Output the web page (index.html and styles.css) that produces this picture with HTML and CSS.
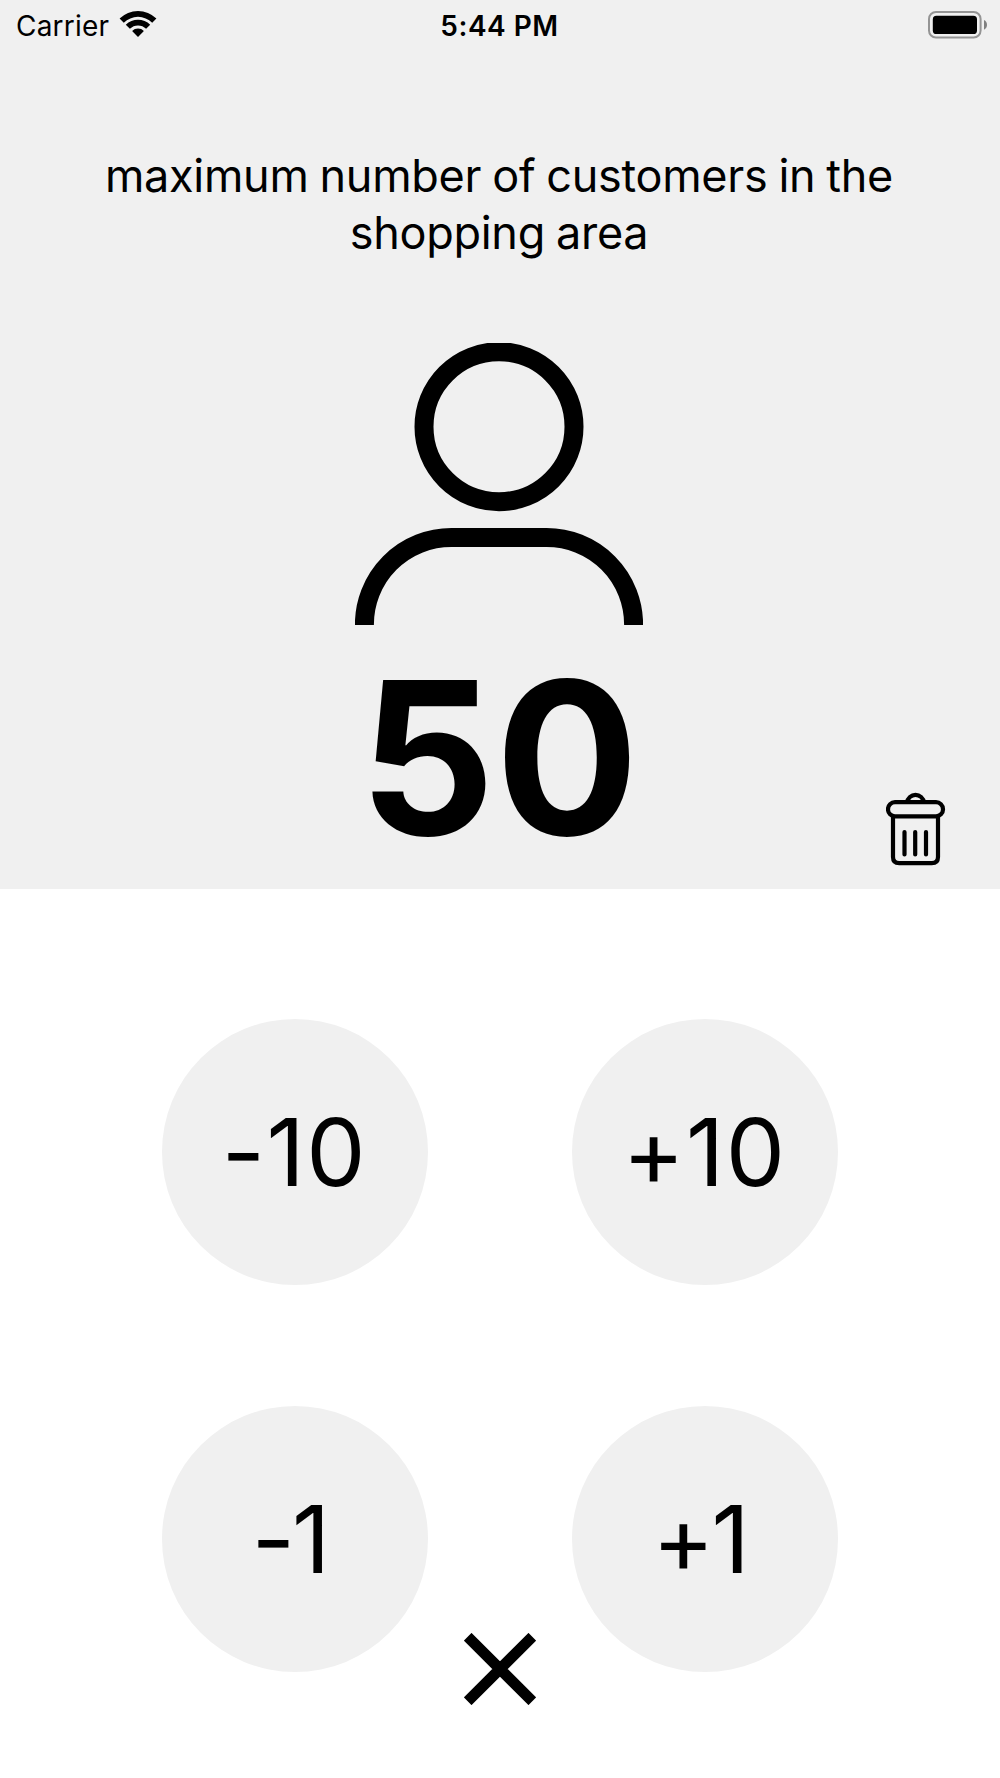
FILE: index.html
```html
<!DOCTYPE html>
<html lang="en">
<head>
    <meta charset="UTF-8">
    <meta name="viewport" content="width=device-width, initial-scale=1.0">
    <title>Customer counter</title>
    <link rel="stylesheet" href="styles.css">
</head>
<body>
    <div class="top">
        <div class="status">
            <div class="status-left">
                <span class="carrier">Carrier</span>
                <svg class="wifi" width="38" height="28" viewBox="0 0 38 28">
                    <path d="M0.6 8.6A26 26 0 0 1 37.4 8.6L33.2 12.7A20.2 20.2 0 0 0 4.8 12.7Z"/>
                    <path d="M6.8 14.8A17.3 17.3 0 0 1 31.2 14.8L27.1 18.8A11.5 11.5 0 0 0 10.9 18.8Z"/>
                    <path d="M13.1 20.9A8.6 8.6 0 0 1 24.9 20.9L19 26.9Z"/>
                </svg>
            </div>
            <span class="time">5:44 PM</span>
            <svg class="battery" width="60" height="28" viewBox="0 0 60 28">
                <rect x="1" y="1" width="51.6" height="25.6" rx="7" fill="none" stroke="#949494" stroke-width="2"/>
                <rect x="4.8" y="4.8" width="44.2" height="18.2" rx="3.6"/>
                <path d="M56 9Q59 10.5 59 13.8T56 18.8Z" fill="#808080"/>
            </svg>
        </div>
        <p class="title">maximum number of customers in the<br>shopping area</p>
        <svg class="person" width="288" height="282" viewBox="0 0 288 282">
            <circle cx="144" cy="83.7" r="75"/>
            <path d="M9.4 282A87 87 0 0 1 96.4 194.5H191.6A87 87 0 0 1 278.6 282"/>
        </svg>
        <div class="number">50</div>
        <button class="trash" aria-label="reset">
            <svg width="60" height="74" viewBox="0 0 60 74">
                <path d="M21 10.5A8.6 9 0 0 1 38 10.5"/>
                <rect x="2" y="10.2" width="55" height="14.2" rx="7"/>
                <path d="M7 24V65Q7 71.2 13.2 71.2H45.8Q52 71.2 52 65V24"/>
                <path d="M18.5 40V62.5M29.2 40V62.5M40 40V62.5" stroke-linecap="round"/>
            </svg>
        </button>
    </div>
    <div class="bottom">
        <div class="buttons">
            <button class="circle ten">-10</button>
            <button class="circle ten">+10</button>
            <button class="circle one">-1</button>
            <button class="circle one">+1</button>
        </div>
        <button class="close" aria-label="close">
            <svg width="72" height="72" viewBox="0 0 72 72">
                <path d="M3.7 3.7L68.3 68.3M68.3 3.7L3.7 68.3"/>
            </svg>
        </button>
    </div>
</body>
</html>
```

FILE: styles.css
```css
*{
    margin: 0;
    padding: 0;
    box-sizing: border-box;
}
body{
    width: 1000px;
    height: 1778px;
    background-color: #fff;
    font-family: Inter, "Liberation Sans", sans-serif;
    font-feature-settings: "calt" 0;
    color: #000;
    overflow: hidden;
}
button{
    border: none;
    background: none;
    font-family: inherit;
    font-feature-settings: inherit;
    color: #000;
    cursor: pointer;
}
svg{
    display: block;
}

/* top half */
.top{
    position: relative;
    height: 889px;
    background-color: #f0f0f0;
    display: flex;
    flex-direction: column;
    align-items: center;
}
.status{
    width: 100%;
    height: 50px;
    padding: 0 12px 0 16px;
    display: grid;
    grid-template-columns: 1fr auto 1fr;
    align-items: center;
    font-size: 28px;
    line-height: 48px;
}
.status-left{
    display: flex;
    align-items: center;
    gap: 10px;
}
.wifi{
    margin-bottom: 2px;
}
.carrier{
    padding-top: 2px;
    letter-spacing: 0.2px;
}
.time{
    padding: 2px 5px 0 0;
    font-weight: 600;
    letter-spacing: 0.5px;
}
.battery{
    justify-self: end;
    margin-bottom: 1px;
}
.title{
    margin: 97px 2px 0 0;
    font-size: 45px;
    line-height: 57px;
    letter-spacing: -0.28px;
    word-spacing: -1.4px;
    text-align: center;
    white-space: nowrap;
}
.person{
    margin: 82px 2px 0 0;
    fill: none;
    stroke: #000;
    stroke-width: 19;
}
.number{
    margin: 26px 2px 0 0;
    font-size: 213px;
    font-weight: 700;
    line-height: 213px;
}
.trash{
    position: absolute;
    right: 54px;
    bottom: 23px;
}
.trash svg{
    fill: none;
    stroke: #000;
    stroke-width: 4.2;
}

/* bottom half */
.bottom{
    position: relative;
    height: 889px;
    padding-top: 130px;
}
.buttons{
    display: grid;
    grid-template-columns: 266px 266px;
    gap: 121px 144px;
    justify-content: center;
}
.circle{
    width: 266px;
    height: 266px;
    border-radius: 50%;
    background-color: #f0f0f0;
    font-size: 94px;
    line-height: 266px;
    text-align: center;
}
.ten{
    padding-right: 1px;
    letter-spacing: 1.5px;
}
.one{
    padding-right: 11px;
    letter-spacing: -3px;
}
.close{
    position: absolute;
    left: 464px;
    bottom: 73px;
}
.close svg{
    stroke: #000;
    stroke-width: 10.8;
}
```
